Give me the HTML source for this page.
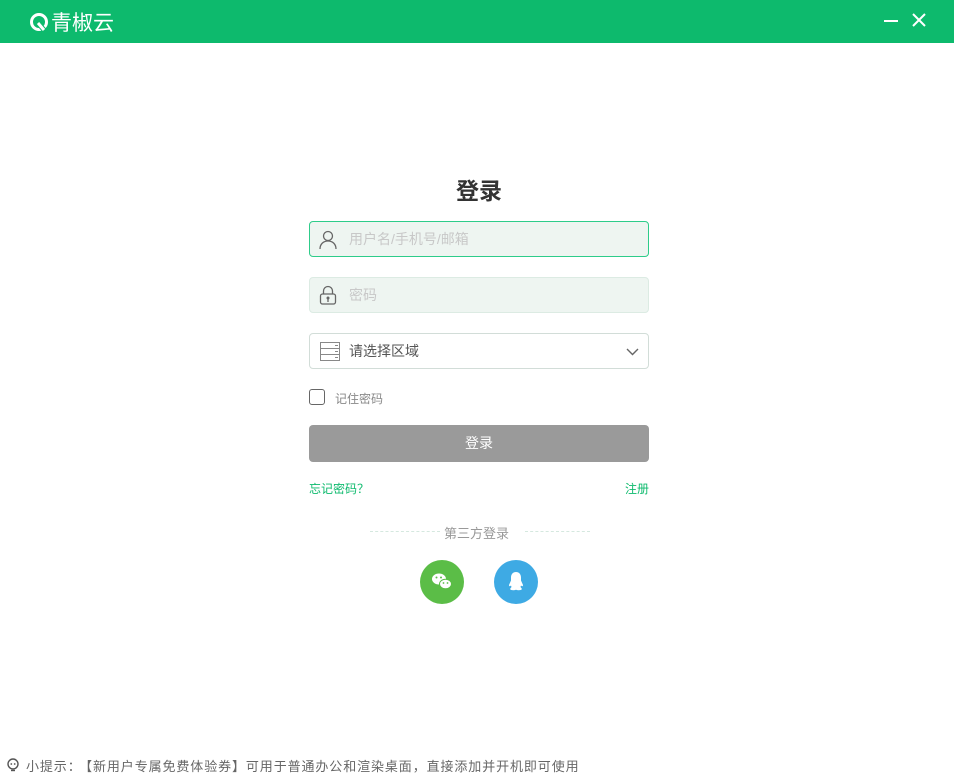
<!DOCTYPE html>
<html><head><meta charset="utf-8"><style>
*{margin:0;padding:0;box-sizing:border-box}
body{width:954px;height:782px;background:#fff;font-family:"Liberation Sans","Noto Sans CJK SC",sans-serif;position:relative;overflow:hidden}
.top{position:absolute;left:0;top:0;width:954px;height:43px;background:#0dba6d}
.logo{position:absolute;left:29px;top:7px;color:#fff;font-size:21px;display:flex;align-items:center;gap:2px}
.abs{position:absolute}
.inp{position:absolute;left:309px;width:340px;height:36px;border-radius:4px;font-size:14px;display:flex;align-items:center}
.ph{position:absolute;left:39px;color:#c8c8c8}
</style></head><body>
<div class="top">
 <div class="logo"><svg width="20" height="20" viewBox="0 0 20 20"><circle cx="10" cy="10" r="7.5" fill="none" stroke="#fff" stroke-width="3"/><path d="M9 11l6 7" stroke="#0dba6d" stroke-width="5"/><path d="M9 11l6 7" stroke="#fff" stroke-width="3"/></svg><span>青椒云</span></div>
 <div class="abs" style="left:884px;top:20px;width:14px;height:2px;background:#fff"></div>
 <svg class="abs" style="left:912px;top:13px" width="14" height="14"><path d="M1 1L13 13M13 1L1 13" stroke="#fff" stroke-width="2"/></svg>
</div>
<div class="abs" style="left:0;top:172px;width:954px;text-align:center;font-size:23px;font-weight:bold;color:#333;padding-left:4px">登录</div>
<div class="inp" style="top:221px;border:1px solid #2ecc8a;background:#eef5f1">
 <svg class="abs" style="left:9px;top:8px" width="18" height="20"><circle cx="9" cy="6" r="4.5" fill="none" stroke="#666" stroke-width="1.3"/><path d="M1 19c0-5 3.5-8 8-8s8 3 8 8" fill="none" stroke="#666" stroke-width="1.3"/></svg>
 <span class="ph">用户名/手机号/邮箱</span></div>
<div class="inp" style="top:277px;border:1px solid #dcebe3;background:#eef5f1">
 <svg class="abs" style="left:9px;top:7px" width="18" height="20"><path d="M4.5 9V6a4.5 4.5 0 0 1 9 0v3" fill="none" stroke="#666" stroke-width="1.3"/><rect x="1.5" y="9" width="15" height="10" rx="2" fill="none" stroke="#666" stroke-width="1.3"/><circle cx="9" cy="13" r="1.5" fill="#666"/><path d="M9 14v3" stroke="#666" stroke-width="1.3"/></svg>
 <span class="ph">密码</span></div>
<div class="inp" style="top:333px;border:1px solid #d2ddd8;background:#fff">
 <svg class="abs" style="left:10px;top:8px" width="20" height="19"><rect x="0.5" y="0.5" width="19" height="18" fill="none" stroke="#888"/><path d="M0 6.5h20M0 12.5h20" stroke="#888"/><path d="M15 3.5h3M15 9.5h3M15 15.5h3" stroke="#888"/></svg>
 <span class="abs" style="left:39px;color:#555">请选择区域</span>
 <svg class="abs" style="left:316px;top:14px" width="13" height="8"><path d="M1 1l5.5 5.5L12 1" fill="none" stroke="#666" stroke-width="1.4"/></svg></div>
<div class="abs" style="left:309px;top:389px;width:16px;height:16px;border:1.4px solid #666;border-radius:3px"></div>
<div class="abs" style="left:335px;top:390px;font-size:12px;color:#888">记住密码</div>
<div class="abs" style="left:309px;top:425px;width:340px;height:37px;background:#9a9a9a;border-radius:4px;color:#fff;font-size:14px;text-align:center;line-height:36px">登录</div>
<div class="abs" style="left:309px;top:480px;font-size:12px;color:#0dba6d">忘记密码？</div>
<div class="abs" style="left:625px;top:480px;font-size:12px;color:#0dba6d">注册</div>
<div class="abs" style="left:370px;top:531px;width:70px;border-top:1px dashed #d5e8df"></div>
<div class="abs" style="left:525px;top:531px;width:65px;border-top:1px dashed #d5e8df"></div>
<div class="abs" style="left:444px;top:523px;font-size:13px;color:#999">第三方登录</div>
<div class="abs" style="left:420px;top:560px;width:44px;height:44px;border-radius:50%;background:#5bbd47">
 <svg class="abs" style="left:11px;top:12px" width="22" height="20"><ellipse cx="8" cy="7" rx="7" ry="5.5" fill="#fff"/><ellipse cx="14.5" cy="12" rx="6" ry="4.8" fill="#fff" stroke="#5bbd47" stroke-width="1"/><circle cx="5.5" cy="5.5" r="1" fill="#5bbd47"/><circle cx="10" cy="5.5" r="1" fill="#5bbd47"/><circle cx="12.5" cy="11" r=".9" fill="#5bbd47"/><circle cx="16.5" cy="11" r=".9" fill="#5bbd47"/></svg></div>
<div class="abs" style="left:494px;top:560px;width:44px;height:44px;border-radius:50%;background:#3eaae4">
 <svg class="abs" style="left:14px;top:11px" width="16" height="22"><path d="M8 1c-3 0-5 2.3-5 5.5v3L1 14c0 1.5 1 1.5 2 .5l.5 1.5L2 18c1 1.5 4 1.5 6 .8 2 .7 5 .7 6-.8l-1.5-2 .5-1.5c1 1 2 1 2-.5l-2-4.5v-3C13 3.3 11 1 8 1z" fill="#fff"/></svg></div>
<svg class="abs" style="left:7px;top:758px" width="12" height="14"><circle cx="6" cy="6" r="5" fill="none" stroke="#555" stroke-width="1.4"/><path d="M4 12.5h4" stroke="#555" stroke-width="1.4"/><circle cx="4.3" cy="6" r=".9" fill="#555"/><circle cx="7.7" cy="6" r=".9" fill="#555"/></svg>
<div class="abs" style="left:26px;top:756px;font-size:13px;color:#666;white-space:nowrap;letter-spacing:0.9px">小提示：<span style="margin-left:4px"></span>【新用户专属免费体验券】可用于普通办公和渲染桌面，直接添加并开机即可使用</div>
</body></html>
